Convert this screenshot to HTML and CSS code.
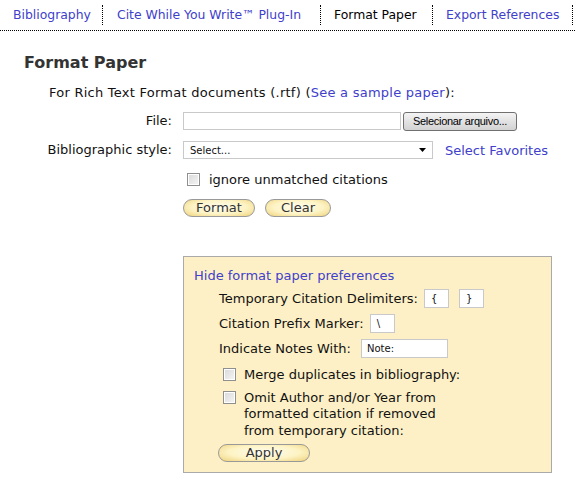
FILE: index.html
```html
<!DOCTYPE html>
<html>
<head>
<meta charset="utf-8">
<link rel="stylesheet" href="styles.css">
</head>
<body>
<nav class="tabs">
  <a class="tab link t1">Bibliography</a>
  <a class="tab link t2">Cite While You Write™ Plug-In</a>
  <a class="tab current t3">Format Paper</a>
  <a class="tab link t4">Export References</a>
</nav>
<main class="content">
  <h1 class="title">Format Paper</h1>
  <p class="intro">For Rich Text Format documents (.rtf) (<a class="link">See a sample paper</a>):</p>
  <div class="form">
    <label class="lbl">File:</label>
    <div class="ctrl file-ctrl">
      <span class="input file-input"></span>
      <span class="file-btn">Selecionar arquivo...</span>
    </div>
    <label class="lbl">Bibliographic style:</label>
    <div class="ctrl style-ctrl">
      <span class="select"><span class="select-text">Select...</span><svg class="arrow" width="7" height="4" viewBox="0 0 7 4"><path d="M0 0H7L3.5 4Z" fill="#000"/></svg></span>
      <a class="link fav">Select Favorites</a>
    </div>
    <span></span>
    <div class="ctrl check-row"><span class="checkbox"></span><span>ignore unmatched citations</span></div>
    <span></span>
    <div class="ctrl btn-row"><span class="pill fmt">Format</span><span class="pill clr">Clear</span></div>
  </div>
  <section class="prefs">
    <a class="link">Hide format paper preferences</a>
    <div class="pref-list">
      <div class="pref">Temporary Citation Delimiters: <span class="input small">{</span><span class="input small gap">}</span></div>
      <div class="pref">Citation Prefix Marker: <span class="input small">\</span></div>
      <div class="pref">Indicate Notes With: <span class="input notes">Note:</span></div>
      <div class="pref-check"><span class="checkbox"></span><span>Merge duplicates in bibliography:</span></div>
      <div class="pref-check omit"><span class="checkbox"></span><span>Omit Author and/or Year from<br>formatted citation if removed<br>from temporary citation:</span></div>
      <span class="pill apply">Apply</span>
    </div>
  </section>
</main>
</body>
</html>
```

FILE: styles.css
```css
html, body {
  margin: 0;
  padding: 0;
  background: #fff;
}
body {
  font-family: "DejaVu Sans", Verdana, sans-serif;
  font-size: 13px;
  color: #111;
}
.link {
  color: #4040cc;
  text-decoration: none;
}
.tabs {
  display: flex;
  height: 30px;
  align-items: center;
  border-bottom: 1px dotted #000;
}
.tab {
  flex: none;
  box-sizing: border-box;
  white-space: nowrap;
  font-size: 12.4px;
  padding-left: 13px;
  line-height: 20px;
  border-right: 1px dotted #000;
}
.t1 { width: 103px; }
.t2 { width: 218px; padding-left: 14px; }
.t3 { width: 112px; padding-left: 13px; }
.t4 { width: 140px; padding-left: 13px; }
.tab.current {
  color: #000;
}
.content {
  padding: 0 0 0 24px;
}
.title {
  margin: 21px 0 0 0;
  font-size: 16px;
  font-weight: bold;
  color: #333;
  line-height: 22px;
}
.intro {
  margin: 10px 0 0 25px;
  line-height: 18px;
  letter-spacing: 0.25px;
}
.form {
  display: grid;
  grid-template-columns: 148px auto;
  grid-auto-rows: 18px;
  column-gap: 11px;
  row-gap: 11px;
  margin-top: 10px;
}
.lbl {
  text-align: right;
  line-height: 18px;
}
.ctrl {
  display: flex;
  align-items: center;
  height: 18px;
}
.input {
  box-sizing: border-box;
  display: inline-block;
  height: 19px;
  border: 1px solid #c9c9c9;
  background: #fff;
  font-size: 10px;
  line-height: 17px;
  padding-left: 6px;
  vertical-align: middle;
}
.file-input {
  width: 218px;
  height: 18px;
}
.file-btn {
  box-sizing: border-box;
  margin-left: 2px;
  width: 114px;
  height: 19px;
  border: 1px solid #707070;
  border-radius: 3px;
  background: linear-gradient(#f4f4f4, #e2e2e2 50%, #d3d3d3);
  font-family: "Liberation Sans", Arial, sans-serif;
  font-size: 11px;
  letter-spacing: -0.3px;
  text-align: center;
  line-height: 17px;
  color: #000;
}
.select {
  box-sizing: border-box;
  width: 250px;
  height: 18px;
  border: 1px solid #c9c9c9;
  display: flex;
  align-items: center;
  justify-content: space-between;
  padding: 0 6px 0 6px;
  font-size: 10px;
}
.fav {
  margin-left: 12px;
}
.check-row {
  gap: 9px;
  padding-left: 4px;
}
.checkbox {
  box-sizing: border-box;
  display: inline-block;
  width: 13px;
  height: 13px;
  border: 1px solid #8f8f8f;
  background: linear-gradient(135deg, #d8d8d8, #f6f6f6);
  box-shadow: inset 0 0 0 1px #fff;
  flex: none;
}
.btn-row {
  gap: 10px;
}
.pill {
  box-sizing: border-box;
  display: inline-block;
  height: 18px;
  border: 1px solid #999;
  border-radius: 9px;
  background: radial-gradient(ellipse at 50% 45%, #fffdf0 0%, #fdf3c4 55%, #efd27a 100%);
  text-align: center;
  line-height: 16px;
  color: #333;
}
.fmt { width: 72px; }
.clr { width: 66px; }
.prefs {
  box-sizing: border-box;
  margin: 39px 0 0 159px;
  width: 369px;
  height: 217px;
  border: 1px solid #aaa;
  background: #fdf0c6;
  padding: 10px 10px 0 10px;
  line-height: 18px;
}
.pref-list {
  padding-left: 25px;
  margin-top: 1px;
}
.pref {
  height: 25px;
  display: flex;
  align-items: center;
  white-space: pre;
}
.pref .input {
  margin-left: 2px;
}
.small { width: 25px; }
.gap { margin-left: 10px !important; }
.pref .notes { width: 87px; padding-left: 5px; margin-left: 6px; }
.pref-check {
  display: flex;
  gap: 8px;
  padding-left: 4px;
  margin-top: 6px;
  line-height: 16.5px;
  align-items: flex-start;
}
.pref-check .checkbox { margin-top: 1px; }
.pref-check.omit { margin-top: 6px; }
.apply {
  width: 92px;
  margin-top: 5px;
  margin-left: -1px;
}
```
